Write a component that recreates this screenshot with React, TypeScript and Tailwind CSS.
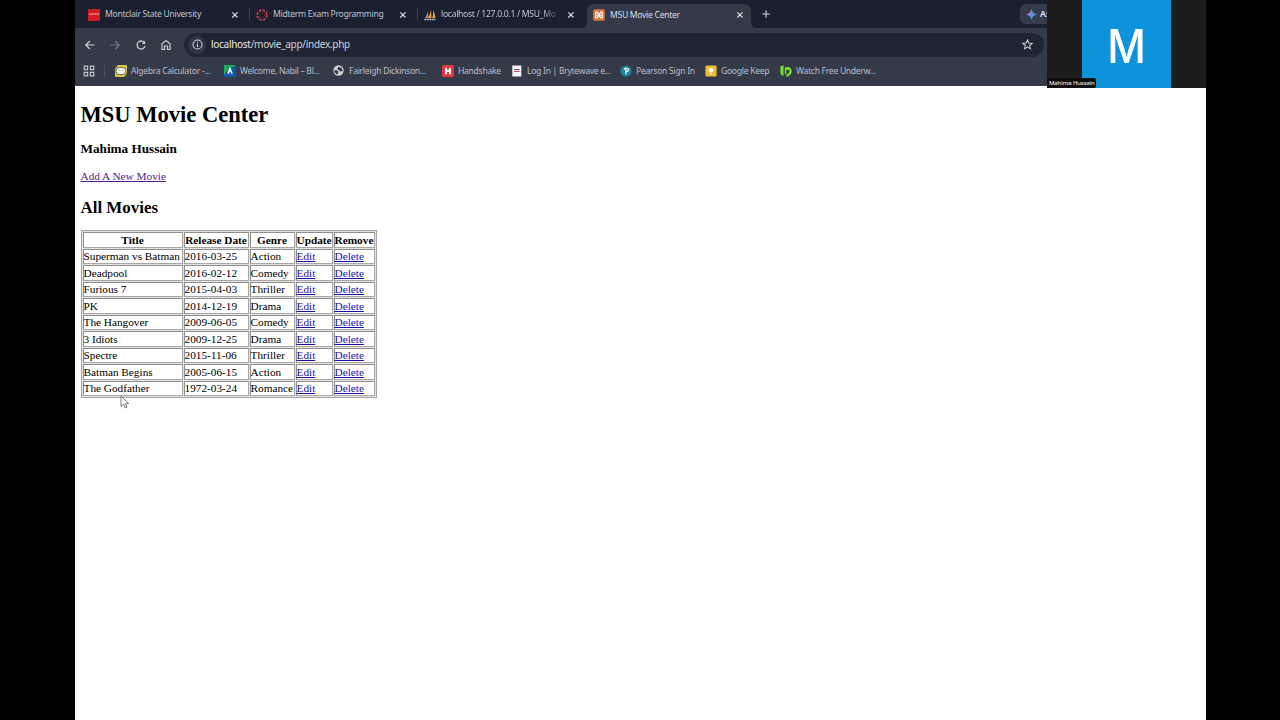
import React from 'react'

interface TabProps {
  title: string
  icon: React.ReactNode
  active?: boolean
  fade?: boolean
}

interface BookmarkProps {
  label: string
  icon: React.ReactNode
  width: string
}

const movies = [
  ['Superman vs Batman', '2016-03-25', 'Action'],
  ['Deadpool', '2016-02-12', 'Comedy'],
  ['Furious 7', '2015-04-03', 'Thriller'],
  ['PK', '2014-12-19', 'Drama'],
  ['The Hangover', '2009-06-05', 'Comedy'],
  ['3 Idiots', '2009-12-25', 'Drama'],
  ['Spectre', '2015-11-06', 'Thriller'],
  ['Batman Begins', '2005-06-15', 'Action'],
  ['The Godfather', '1972-03-24', 'Romance'],
]

const headers = [
  { label: 'Title', width: 'w-[100px]' },
  { label: 'Release Date', width: 'w-[65px]' },
  { label: 'Genre', width: 'w-[45px]' },
  { label: 'Update', width: 'w-[37px]' },
  { label: 'Remove', width: 'w-[41px]' },
]

const cell = 'h-[15.5px] border border-[#8f8f8f] border-r-[#a8a8a8] border-b-[#a8a8a8] bg-white p-0 whitespace-nowrap'

const CloseIcon = () => (
  <svg viewBox="0 0 8 8" className="w-2 h-2 shrink-0" stroke="#d5d8e0" strokeWidth="1.2">
    <path d="M1.3 1.3l5.2 5.2M6.5 1.3L1.3 6.5" />
  </svg>
)

const MontclairIcon = () => (
  <svg viewBox="0 0 12 12" className="w-3 h-3">
    <rect width="12" height="12" rx="1" fill="#d01c22" />
    <path d="M1 5.2h10" stroke="#efa9a9" strokeWidth="1.2" strokeDasharray="1.2 .3" />
  </svg>
)

const CanvasIcon = () => (
  <svg viewBox="0 0 12 12" className="w-3 h-3" fill="none">
    <circle cx="6" cy="6" r="4.9" stroke="#c93a40" strokeWidth="1.8" strokeDasharray="2.6 1.25" />
    <circle cx="6" cy="6" r="2.6" stroke="#c93a40" strokeWidth=".8" strokeDasharray=".8 1.24" />
  </svg>
)

const PhpMyAdminIcon = () => (
  <svg viewBox="0 0 12 12" className="w-3 h-3">
    <path d="M4 1.2C3.8 4 2.6 6.8.8 9h3.5z" fill="#8c8f9c" />
    <path d="M7 .4C6.6 4 5.2 6.600 3.500 9h4z" fill="#f29a2e" />
    <path d="M9 1.400c1.400 2 2.400 4.800 2.400 7.600H8.200C9 6.800 9.200 4.200 9 1.400z" fill="#f0a34a" />
    <path d="M.3 10.400h11.2" stroke="#b9bccb" strokeWidth="1.500" strokeDasharray="2 .5" />
  </svg>
)

const XamppIcon = () => (
  <svg viewBox="0 0 12 12" className="w-3 h-3" fill="none">
    <rect x=".2" y=".2" width="11.6" height="11.6" rx="1.600" fill="#e0733c" />
    <path
      d="M4.200 3.100H3.500Q2.400 3.100 2.400 4.300T3.500 6Q2.400 6.300 2.400 7.600T3.500 8.900H4.200L7.800 3.100H8.500Q9.600 3.100 9.600 4.300T8.500 6Q9.600 6.300 9.600 7.600T8.500 8.900H7.800L4.200 3.100"
      stroke="#fff"
      strokeWidth="1.200"
    />
  </svg>
)

const Tab = ({ title, icon, active, fade }: TabProps) => (
  <div className="flex w-[151px] shrink-0 items-center">
    <span className="w-[17px] shrink-0">{icon}</span>
    <span
      className={`whitespace-nowrap text-[8.6px] tracking-[-0.3px] ${active ? 'text-[#d8dbe3]' : 'text-[#bfc3ce]'} ${fade ? 'w-[118px] overflow-hidden [mask-image:linear-gradient(90deg,#000_86%,transparent)]' : ''}`}
    >
      {title}
    </span>
    <span className="ml-auto"><CloseIcon /></span>
  </div>
)

const Bookmark = ({ label, icon, width }: BookmarkProps) => (
  <div className={`flex items-center shrink-0 ${width}`}>
    <span className="w-4 shrink-0">{icon}</span>
    <span className="whitespace-nowrap text-[8.6px] tracking-[-0.3px] text-[#b9bdc9]">{label}</span>
  </div>
)

const TabStrip = () => (
  <div className="flex h-7 bg-[#1a2030] pl-[13px] pt-px">
    <Tab title="Montclair State University" icon={<MontclairIcon />} />
    <div className="w-px h-3 mt-[7px] ml-[10px] mr-[6px] bg-[#3a4153]" />
    <Tab title="Midterm Exam Programming" icon={<CanvasIcon />} />
    <div className="w-px h-3 mt-[7px] ml-[10px] mr-[6px] bg-[#3a4153]" />
    <Tab title="localhost / 127.0.0.1 / MSU_Mo" icon={<PhpMyAdminIcon />} fade />
    <div className="flex items-end ml-[6px]">
      <svg viewBox="0 0 6 6" className="w-[6px] h-[6px] fill-[#353a49]"><path d="M6 0v6H0c4 0 6-2 6-6z" /></svg>
      <div className="flex h-6 w-[164px] rounded-t-[7px] bg-[#353a49] pl-[6px] pr-[7px] pb-[2px]">
        <Tab title="MSU Movie Center" icon={<XamppIcon />} active />
      </div>
      <svg viewBox="0 0 6 6" className="w-[6px] h-[6px] fill-[#353a49]"><path d="M0 0v6h6C2 6 0 4 0 0z" /></svg>
    </div>
    <svg viewBox="0 0 8 8" className="w-2 h-2 mt-[9px] ml-[5px]" stroke="#d0d3dc" strokeWidth="1.1">
      <path d="M4 .3v7.4M.3 4h7.4" />
    </svg>
    <div className="ml-auto mt-[3px] flex h-5 w-[27px] items-center rounded-l-[6px] bg-[#343b4a] pl-[6px] overflow-hidden">
      <svg viewBox="0 0 12 12" className="w-[11px] h-[11px] shrink-0">
        <defs>
          <linearGradient id="spark" x1="0" y1="0" x2="1" y2="1">
            <stop offset="0.25" stopColor="#f2675c" />
            <stop offset="0.45" stopColor="#6a8ee8" />
            <stop offset="0.65" stopColor="#4b8cf0" />
            <stop offset="0.8" stopColor="#62bd70" />
          </linearGradient>
        </defs>
        <path d="M6 0c.7 3.400 2.600 5.300 6 6-3.400.7-5.300 2.600-6 6-.7-3.400-2.600-5.300-6-6 3.400-.7 5.300-2.600 6-6z" fill="url(#spark)" />
      </svg>
      <span className="ml-[3px] text-[9px] font-semibold text-[#e3e5ea]">As</span>
    </div>
  </div>
)

const AddressBar = () => (
  <div className="flex h-[33px] items-center pl-[9px] pr-[3px]">
    <svg viewBox="0 0 12 12" className="w-3 h-3" fill="none" stroke="#c9ccd6" strokeWidth="1.2">
      <path d="M10.5 6H2M5.8 2L1.8 6l4 4" />
    </svg>
    <svg viewBox="0 0 12 12" className="w-3 h-3 ml-[13px]" fill="none" stroke="#727786" strokeWidth="1.2">
      <path d="M1.5 6H10M6.2 2l4 4-4 4" />
    </svg>
    <svg viewBox="0 0 12 12" className="w-3 h-3 ml-[14px]" fill="none" stroke="#c9ccd6" strokeWidth="1.3">
      <path d="M9.7 4.3A4 4 0 1 0 10 6.9" />
      <path d="M10.2 1.5v3.4H6.8z" fill="#c9ccd6" stroke="none" />
    </svg>
    <svg viewBox="0 0 12 12" className="w-3 h-3 ml-[13px]" fill="none" stroke="#c9ccd6" strokeWidth="1.2">
      <path d="M2 10.5V4.7L6 1.6l4 3.1v5.8H7.5V7H4.5v3.5z" />
    </svg>
    <div className="ml-[12px] flex h-6 flex-1 items-center rounded-full bg-[#202534] pl-[4px] pr-[11px]">
      <span className="flex h-[18px] w-[18px] items-center justify-center rounded-full bg-[#303646]">
        <svg viewBox="0 0 12 12" className="w-[11px] h-[11px]" fill="none" stroke="#d0d3dc" strokeWidth="1.1">
          <circle cx="6" cy="6" r="4.9" />
          <path d="M6 5.2v3.600M6 3v1.2" />
        </svg>
      </span>
      <span className="ml-[5px] text-[10px] tracking-[-0.29px] text-[#cdd1da]">
        <span className="text-[#e5e7ec]">localhost</span>/movie_app/index.php
      </span>
      <svg viewBox="0 0 12 12" className="ml-auto w-[11px] h-[11px]" fill="none" stroke="#d0d3dc" strokeWidth="1.1">
        <path d="M6 1l1.4 3.4 3.7.3-2.8 2.4.9 3.6L6 8.8l-3.2 1.9.9-3.6L.9 4.7l3.700-.3z" />
      </svg>
    </div>
  </div>
)

const BookmarksBar = () => (
  <div className="flex h-[25px] items-center pb-[5px] pl-[8px]">
    <svg viewBox="0 0 12 12" className="w-3 h-3" fill="none" stroke="#bdc1cc" strokeWidth="1.2">
      <path d="M1.2 1.2h3.4v3.4H1.2zM7.4 1.2h3.4v3.4H7.4zM1.2 7.4h3.4v3.4H1.2zM7.4 7.4h3.4v3.4H7.4z" />
    </svg>
    <div className="ml-[9px] mr-[10px] h-3 w-px bg-[#4c5262]" />
    <Bookmark
      label="Algebra Calculator -..."
      width="w-[109px]"
      icon={
        <svg viewBox="0 0 12 12" className="w-3 h-3">
          <rect width="12" height="12" rx="1" fill="#dec34b" />
          <path d="M0 0h3L0 4zM9 12h3V8z" fill="#4e4c38" />
          <rect x="1.2" y="2.6" width="9.6" height="6.800" rx="3" fill="#fff" stroke="#46442f" strokeWidth=".8" />
          <path d="M3.4 5.2h1.8M6.8 5.2h1.8" stroke="#77756a" strokeWidth=".8" />
        </svg>
      }
    />
    <Bookmark
      label="Welcome, Nabil – Bl..."
      width="w-[109px]"
      icon={
        <svg viewBox="0 0 12 12" className="w-3 h-3">
          <path d="M0 0h12v12H0z" fill="#1457a8" />
          <path d="M0 0h12L4 5 0 10z" fill="#21a85f" />
          <path d="M4 8.600L6 3.800 8 8.600" fill="none" stroke="#fff" strokeWidth="1.500" />
        </svg>
      }
    />
    <Bookmark
      label="Fairleigh Dickinson..."
      width="w-[109px]"
      icon={
        <svg viewBox="0 0 12 12" className="w-[11px] h-[11px]">
          <circle cx="6" cy="6" r="5.6" fill="#cfd2da" />
          <path d="M1.3 5.6l3 .2 1.5 1.6-.5 2.8C2.900 10 1.300 8 1.300 5.600zM6 1.800l3.200 1.200L10.600 6 8.800 7.300 6.900 5.900 5.200 5.300l-.5-1.500z" fill="#353a49" />
        </svg>
      }
    />
    <Bookmark
      label="Handshake"
      width="w-[69px]"
      icon={
        <svg viewBox="0 0 12 12" className="w-3 h-3">
          <rect width="12" height="12" rx="1.5" fill="#e0383c" />
          <path d="M4 2.800v6.400M8 2.800v6.400M4 6.300L8 5.500" stroke="#fff" strokeWidth="2" />
        </svg>
      }
    />
    <Bookmark
      label="Log In | Brytewave e..."
      width="w-[109px]"
      icon={
        <svg viewBox="0 0 12 12" className="w-3 h-3">
          <rect x="1.3" y=".5" width="9" height="11" fill="#f5f5f7" />
          <path d="M3 4.5h5.6" stroke="#5c4a62" />
          <path d="M3 6.5h5.6" stroke="#df4653" />
        </svg>
      }
    />
    <Bookmark
      label="Pearson Sign In"
      width="w-[85px]"
      icon={
        <svg viewBox="0 0 12 12" className="w-3 h-3">
          <circle cx="6" cy="6" r="5.6" fill="#19859a" />
          <path d="M4 4.100c2.200-1.500 4.700-1 4.500.7C8.400 6.300 7 6.600 5.800 6.400M5.900 3.500v5.700" fill="none" stroke="#fff" strokeWidth="1.2" />
        </svg>
      }
    />
    <Bookmark
      label="Google Keep"
      width="w-[75px]"
      icon={
        <svg viewBox="0 0 12 12" className="w-3 h-3">
          <rect x=".4" y=".4" width="11.2" height="11.2" rx="1.5" fill="#edbd37" />
          <circle cx="6" cy="5.2" r="2.2" fill="#fff" />
          <path d="M4.900 8.600h2.2" stroke="#fff" />
        </svg>
      }
    />
    <Bookmark
      label="Watch Free Underw..."
      width="w-[100px]"
      icon={
        <svg viewBox="0 0 12 12" className="w-3 h-3">
          <path d="M.5 1.200L3.500.3v11L.5 9zM4.800 2.600C9 .8 11.700 3 11.700 6S9.500 11.500 6 11.700l.8-2.400c1.800-.4 2.800-1.600 2.600-3.200-.2-1.700-3-1.600-3.100 0V9.200H4.800z" fill="#72e52b" />
        </svg>
      }
    />
  </div>
)

const CallTile = () => (
  <div className="relative flex h-[88px] w-[159px] shrink-0 justify-center bg-[#1d1d1d]">
    <div className="flex w-[89px] items-center justify-center bg-[#0e93da] pt-[3px] text-[47px] leading-none font-medium text-white font-['Inter',sans-serif]">
      <span className="scale-x-90">M</span>
    </div>
    <div className="absolute bottom-0 left-0 flex h-[10px] w-[49px] items-center rounded-r-[2px] bg-[#101010] pl-[2px] text-[6px] tracking-[-0.1px] whitespace-nowrap text-white">
      Mahima Hussain
    </div>
  </div>
)

const MoviesPage = () => (
  <div className="flex-1 pl-[5.5px] text-[11.28px] leading-[13px] text-black font-['Liberation_Serif',serif]">
    <h1 className="pt-[16px] text-[22.56px] leading-[26px] font-bold">MSU Movie Center</h1>
    <h3 className="mt-[13px] text-[13.2px] leading-[15px] font-bold">Mahima Hussain</h3>
    <p className="mt-[14px]"><a className="text-[#551a8b] underline">Add A New Movie</a></p>
    <h2 className="mt-[15px] text-[16.92px] leading-[19px] font-bold">All Movies</h2>
    <table className="mt-[13.4px] w-[296px] table-fixed border-separate border-spacing-[1px] border border-[#a5a5a5] bg-[#e2e2e2]">
      <thead>
        <tr>
          {headers.map(h => (
            <th key={h.label} className={`${cell} text-center font-bold ${h.width}`}>
              {h.label}
            </th>
          ))}
        </tr>
      </thead>
      <tbody>
        {movies.map(([title, date, genre]) => (
          <tr key={title}>
            <td className={cell}>{title}</td>
            <td className={cell}>{date}</td>
            <td className={cell}>{genre}</td>
            <td className={cell}><a className="text-[#1a12a8] underline">Edit</a></td>
            <td className={cell}><a className="text-[#1a12a8] underline">Delete</a></td>
          </tr>
        ))}
      </tbody>
    </table>
  </div>
)

const Pointer = () => (
  <svg viewBox="0 0 10 14" className="absolute left-[120px] top-[395px] h-[14px] w-[10px]">
    <path d="M1 1v10.5l2.6-2.3 1.7 3.800 1.700-.8-1.700-3.600h3.500z" fill="#fff" stroke="#555" strokeWidth=".8" />
  </svg>
)

export default function App() {
  return (
    <div className="relative flex h-[720px] w-[1280px] overflow-hidden bg-black pl-[75px] font-['Noto_Sans',sans-serif]">
      <div className="flex w-[1131px] flex-col bg-white">
        <div className="flex h-[86px]">
          <div className="w-[972px] shrink-0 bg-[#353a49]">
            <TabStrip />
            <AddressBar />
            <BookmarksBar />
          </div>
          <CallTile />
        </div>
        <MoviesPage />
      </div>
      <Pointer />
    </div>
  )
}
